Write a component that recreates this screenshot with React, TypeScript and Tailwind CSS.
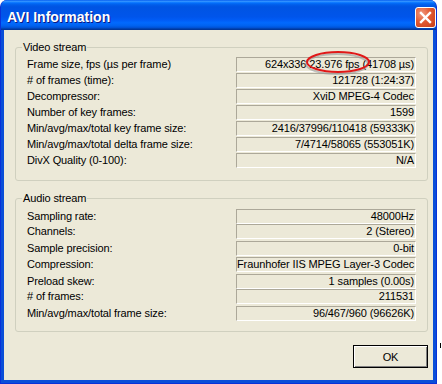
import React from "react";

const videoRows: [string, string][] = [
  ["Frame size, fps (µs per frame)", "624x336 23.976 fps (41708 µs)"],
  ["# of frames (time):", "121728 (1:24:37)"],
  ["Decompressor:", "XviD MPEG-4 Codec"],
  ["Number of key frames:", "1599"],
  ["Min/avg/max/total key frame size:", "2416/37996/110418 (59333K)"],
  ["Min/avg/max/total delta frame size:", "7/4714/58065 (553051K)"],
  ["DivX Quality (0-100):", "N/A"],
];

const audioRows: [string, string, string][] = [
  ["Sampling rate:", "48000Hz", "h-[15px]"],
  ["Channels:", "2 (Stereo)", "h-[17px]"],
  ["Sample precision:", "0-bit", "h-[16px]"],
  ["Compression:", "Fraunhofer IIS MPEG Layer-3 Codec", "h-[17px]"],
  ["Preload skew:", "1 samples (0.00s)", "h-[15px]"],
  ["# of frames:", "211531", "h-[17px]"],
  ["Min/avg/max/total frame size:", "96/467/960 (96626K)", "h-[15px]"],
];

function Row({ label, value, h }: { label: string; value: string; h: string }) {
  return (
    <div className={`flex items-start ${h}`}>
      <div className="w-[209px] h-[15px] leading-[15px] whitespace-nowrap">{label}</div>
      <div className="w-[180px] h-[15px] border-t border-l border-b border-r border-t-[#aca899] border-l-[#aca899] border-b-white border-r-white text-right pr-[1px] leading-[13px] whitespace-nowrap">
        {value}
      </div>
    </div>
  );
}

function Group({ title, children, pt }: { title: string; children: React.ReactNode; pt: string }) {
  return (
    <div className={`relative h-[134px] border border-[#d0d0bf] rounded-[3px] pl-[11px] ${pt}`}>
      <span className="absolute left-[6px] top-[-8px] px-[1px] bg-[#ece9d8] leading-[14px] whitespace-nowrap">
        {title}
      </span>
      {children}
    </div>
  );
}

export default function App() {
  return (
    <div className="w-[442px] h-[384px] bg-white flex font-['Liberation_Sans',Arial,sans-serif] text-[11px] tracking-[-0.12px] text-black">
      <div className="relative w-[437px] h-[384px] flex flex-col rounded-t-[7px] overflow-hidden bg-[#0a4ed8] border-l border-r border-b border-[#0831d9]">
        {/* title bar */}
        <div className="h-[30px] shrink-0 flex items-center justify-between pl-[6px] pr-[0px] pt-[4px] bg-[linear-gradient(180deg,#0058ee_0%,#3593ff_4%,#288eff_6%,#127dff_8%,#036ffc_10%,#0262ee_14%,#0057e5_20%,#0054e3_24%,#0055eb_56%,#005bf5_66%,#026afe_76%,#0062ef_86%,#0052d6_92%,#0040ab_96%,#003092_100%)]">
          <span className="text-white font-bold text-[14px] tracking-normal leading-[16px] [text-shadow:1px_1px_0_#0a1883] whitespace-nowrap">
            AVI Information
          </span>
          <div className="w-[21px] h-[21px] rounded-[3px] border border-white bg-[radial-gradient(circle_at_30%_30%,#f09a80_0%,#e25a32_45%,#c63c18_100%)] flex items-center justify-center">
            <svg width="13" height="13" viewBox="0 0 13 13">
              <line x1="2" y1="2" x2="11" y2="11" stroke="white" strokeWidth="2.4" strokeLinecap="square" />
              <line x1="11" y1="2" x2="2" y2="11" stroke="white" strokeWidth="2.4" strokeLinecap="square" />
            </svg>
          </div>
        </div>
        {/* client */}
        <div className="flex-1 mx-[3px] mb-[3px] bg-[#ece9d8] flex flex-col pl-[11px] pr-[5px]">
          <div className="mt-[17px]">
            <Group title="Video stream" pt="pt-[9px]">
              {videoRows.map(([l, v]) => (
                <Row key={l} label={l} value={v} h="h-[16px]" />
              ))}
            </Group>
          </div>
          <div className="mt-[17px]">
            <Group title="Audio stream" pt="pt-[10px]">
              {audioRows.map(([l, v, h]) => (
                <Row key={l} label={l} value={v} h={h} />
              ))}
            </Group>
          </div>
          <div className="mt-[13px] flex justify-end">
            <button className="w-[75px] h-[23px] border border-black bg-[#ece9d8] shadow-[inset_1px_1px_0_#ffffff,inset_-1px_-1px_0_#808080] text-[11px] leading-[20px] text-center">
              OK
            </button>
          </div>
        </div>
        {/* red annotation ellipse */}
        <svg className="absolute left-[302px] top-[48px]" width="72" height="30" viewBox="0 0 72 30">
          <ellipse cx="34" cy="16" rx="31" ry="10" fill="none" stroke="#9a9a9a" strokeOpacity="0.6" strokeWidth="2" />
          <ellipse cx="35" cy="14" rx="31" ry="10" fill="none" stroke="#e01818" strokeWidth="2" />
        </svg>
      </div>
      <div className="w-[5px] h-[384px] flex flex-col items-end">
        <div className="mt-[343px] mr-[1px] w-[1px] h-[5px] bg-black" />
      </div>
    </div>
  );
}
